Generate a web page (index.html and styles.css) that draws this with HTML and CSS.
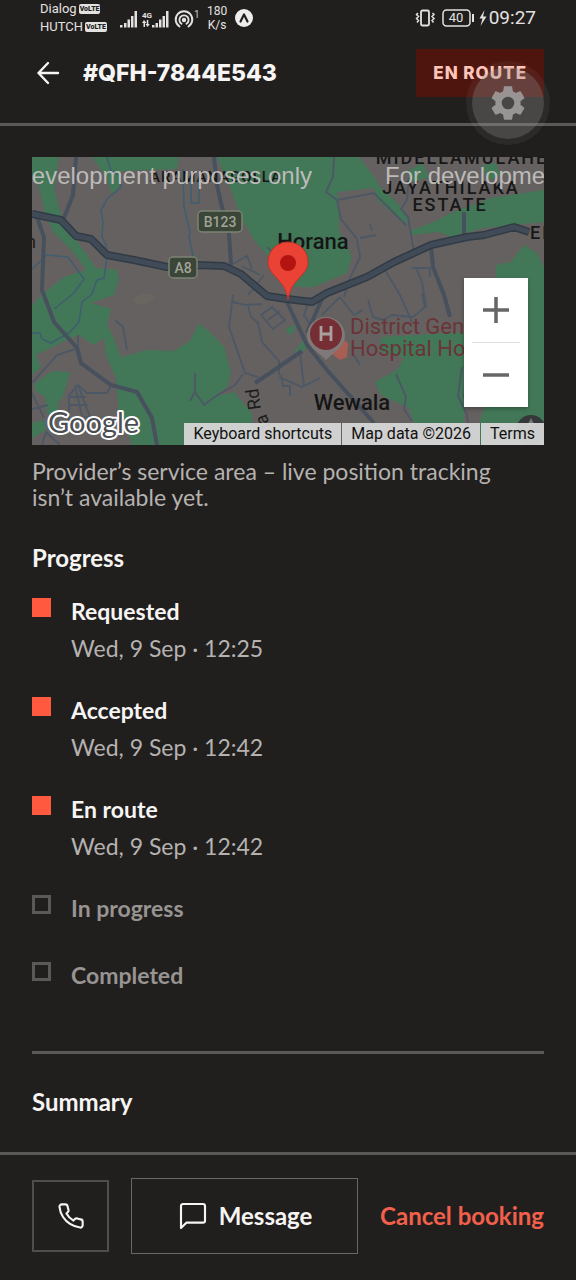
FILE: index.html
```html
<!DOCTYPE html>
<html lang="en">
<head>
<meta charset="utf-8">
<meta name="viewport" content="width=device-width, initial-scale=1">
<title>Booking #QFH-7844E543</title>
<link rel="stylesheet" href="styles.css">
</head>
<body>
<div class="app">
  <div class="status">
    <div class="carriers">
      <span class="carrier">Dialog <b class="volte">VoLTE</b></span>
      <span class="carrier">HUTCH <b class="volte">VoLTE</b></span>
    </div>
    <svg class="signals" width="80" height="24" viewBox="0 0 80 24" aria-hidden="true">
      <g fill="#e4e2e0">
        <path d="M0 19h2.500v2.500H0zM4 17h2.500v4.500H4zM7.500 13.500h2.500v8H7.500zM11 10h2.500v11.500H11zM14.500 5h2.500v16.500h-2.500z"/>
        <path d="M32 19h2.500v2.500H32zM35.500 17h2.500v4.500h-2.500zM39 13.500h2.500v8H39zM42.500 10h2.500v11.500h-2.500zM46 5h2.500v16.500H46z"/>
        <path d="M24 14l2.500 3H25v4h-1.500v-4H22zM27.500 21l-2-3h1.300v-4h1.500v4h1.500z"/>
        <circle cx="64" cy="14" r="2.200"/>
      </g>
      <g fill="none" stroke="#e4e2e0" stroke-width="1.900" stroke-linecap="round">
        <path d="M61.500 17.800a4.600 4.600 0 1 1 5 0M59.500 20.500a8.300 8.300 0 1 1 9 0"/>
      </g>
      <text x="22" y="12" class="tiny-bold">4G</text>
      <text x="74" y="12" class="tiny">1</text>
    </svg>
    <div class="speed"><span>180</span><span>K/s</span></div>
    <svg class="expo" width="18" height="18" viewBox="0 0 18 18" aria-hidden="true">
      <circle cx="9" cy="9" r="9" fill="#efedeb"/>
      <path d="M5.500 12.500L9 5.500l3.500 7" fill="none" stroke="#211f1e" stroke-width="2.200" stroke-linecap="round" stroke-linejoin="round"/>
    </svg>
    <svg class="device" width="72" height="20" viewBox="0 0 72 20" aria-hidden="true">
      <g fill="none" stroke="#e4e2e0" stroke-width="1.500">
        <rect x="6" y="2.500" width="8" height="15" rx="1.500" stroke-width="1.800"/>
        <path d="M3 5L1.500 6.500 3.500 8.500 1.500 10.500 3.500 12.500 2 14.500M17.500 5L19 6.500 17 8.500 19 10.500 17 12.500 18.500 14.500"/>
        <rect x="28" y="2" width="27" height="16" rx="3.500"/>
        <path d="M58 6v8" stroke-width="2"/>
      </g>
      <path d="M69.500 2L64.500 10.500h3L65.500 18l6-9.500H68z" fill="#e4e2e0"/>
      <text x="41" y="14" class="battery">40</text>
    </svg>
    <time class="clock">09:27</time>
  </div>

  <header class="header">
    <button class="back" type="button" aria-label="Back">
      <svg width="24" height="24" viewBox="0 0 24 24" fill="none" stroke="#f7f5f3" stroke-width="2.400" stroke-linecap="round" stroke-linejoin="round"><path d="M22 12H2.500M12 2L2.500 12 12 22"/></svg>
    </button>
    <h1 class="title">#QFH-7844E543</h1>
    <span class="badge">EN ROUTE</span>
    <button class="settings" type="button" aria-label="Settings">
      <svg width="42" height="42" viewBox="0 0 24 24"><path fill="#9f9e9d" d="M19.140 12.940c.040-.3.060-.610.060-.940s-.020-.640-.070-.940l2.030-1.580a.49.49 0 0 0 .120-.610l-1.920-3.320a.488.488 0 0 0-.590-.220l-2.390.960a7.030 7.030 0 0 0-1.620-.940l-.360-2.540a.484.484 0 0 0-.480-.410h-3.840c-.240 0-.430.170-.470.410l-.360 2.540c-.590.240-1.130.570-1.620.940l-2.390-.960c-.220-.080-.470 0-.590.220L2.740 8.870c-.120.210-.080.470.120.610l2.030 1.580c-.050.3-.090.630-.090.940s.020.640.070.940l-2.030 1.580a.49.49 0 0 0-.120.610l1.920 3.320c.120.220.370.290.590.220l2.390-.960c.5.380 1.030.7 1.620.940l.360 2.540c.050.240.240.410.480.410h3.840c.240 0 .440-.170.470-.410l.360-2.540c.590-.240 1.130-.560 1.620-.940l2.390.960c.220.080.470 0 .590-.220l1.920-3.320a.49.49 0 0 0-.120-.610zM12 15.600a3.600 3.600 0 1 1 0-7.200 3.600 3.600 0 0 1 0 7.200z"/></svg>
    </button>
  </header>

  <main class="content">
    <section class="map" aria-label="Map of Horana">
      <svg class="map-art" viewBox="0 0 512 288" preserveAspectRatio="xMidYMid slice">
        <rect width="512" height="288" fill="#656160"/>
        <g fill="#427858">
          <path d="M0 0H27L22 33 29 57 42 80 64 111 85 113 87 122 82 138 59 146 79 152 75 168 79 175 89 200 115 193 142 194 158 184 167 166 179 176 192 190 199 216 195 230 182 240 202 235 219 255 225 288H99V283L87 261 84 221 74 198 72 181 62 188 47 178 39 181 4 198 9 210 0 218V148L12 136 32 120 54 113 42 96 22 76 14 60 7 30 0 20z"/>
          <path d="M60 0L74 20 80 37 87 30 90 14 145 12 147 0z"/>
          <path d="M185 0L199 33 209 60 222 83 240 104 252 130H282L315 116 320 100 307 73V43L305 35 342 31 345 43 374 68 376 60 365 46 348 30 342 20 327 0z"/>
          <path d="M380 78V73L402 65 419 56 459 41 512 33V65L452 71 419 80 407 75z"/>
          <path d="M376 14L390 6 397 20 378 26zM450 8L464 6 468 18 456 24z"/>
          <path d="M464 108L479 105 492 88 505 96 512 110V288H440L452 251 464 230z"/>
          <path d="M349 180L432 175V266H382L377 251 349 238 343 225 365 213 372 201 349 195z"/>
          <path d="M254 171L264 168 262 175 256 178zM263 194L272 183 274 192 265 198z"/>
          <path d="M2 227L20 214 38 215 32 237 26 246V262L15 256 13 240 3 234zM0 266L12 263 14 273 0 281z"/>
        </g>
        <path d="M100 142Q113 132 123 140 111 154 100 142z" fill="#68665e"/>
        <path d="M299 196L312 183 316 186 315 200 308 203z" fill="#a85e51"/>
        <g fill="none" stroke="#405e70" stroke-width="1.600">
          <path d="M75 0L79 14 88 18 89 30 75 42 69 53 71 65 70 80 74 88 75 100 72 121 65 123 60 137 50 145 47 165 38 175 19 186 10 182 8 176 0 176"/>
          <path d="M15 98L36 100 52 122 42 136 22 152M15 98L0 112"/>
          <path d="M151 12L152 50 158 75 157 80 163 108M159 20V46H167V25"/>
        </g>
        <g fill="none" stroke="#4d5866" stroke-width="1.900">
          <path d="M302 0L301 20 294 35 305 43 342 36 374 68M305 43L309 62 325 82 328 100 318 121 312 140M328 81L344 78M338 67L340 74M377 21L375 43 369 52 376 60 382 95M353 113L368 138 380 165M380 111H398V120M384 111L390 125 394 150M199 108L215 99 220 112M235 90L252 106M232 118L216 138M228 118L210 109M46 178V191L25 198 0 226M79 228L75 236 55 236 46 228 37 238V265M46 228L58 260 39 262M43 228L51 264M37 240H54M37 248H56M0 236L12 261M0 252L16 248M10 288L14 275 28 288M83 163L91 170 95 193M163 216V235L172 248 184 239 203 228 211 217M163 235L158 244M201 138L197 170 213 216 226 220M201 145L213 148 230 147M216 148L219 160 226 166 230 185 247 204 247 218M229 158L240 150 253 163 241 172zM236 163L248 154M249 218L251 229H258V239M247 220L270 230 288 221M278 140L272 158 280 170M290 158L308 140M308 140L322 158 331 153M336 143L341 160 351 163 360 158 381 160 393 150 390 136M268 196L272 230M321 197L328 208M364 217L374 240 372 252 380 264"/>
          <path d="M430 210L426 239 435 258 438 288M435 211L432 241"/>
        </g>
        <g fill="none" stroke="#47505d" stroke-width="4">
          <path d="M182 0L185 28 189 46 197 77 199 108M44 0L41 38 32 61M5 60L12 80 10 133 22 165 45 191 49 206 79 228 105 235 120 261 125 288M255 145L275 188 295 213 342 266M432 55V80M399 90L401 110 412 138 418 160M223 226L238 216 270 194M290 142L275 176"/>
        </g>
        <g fill="none" stroke-linejoin="round">
          <path d="M0 57L29 63 44 79 59 82 75 98 102 103 135 110 165 108 192 109 209 117 235 139 255 142 280 145 295 136 335 120 362 105 399 88 435 80 452 78 482 70 497 75" stroke="#303b45" stroke-width="8"/>
          <path d="M0 57L29 63 44 79 59 82 75 98 102 103 135 110 165 108 192 109 209 117 235 139 255 142 280 145 295 136 335 120 362 105 399 88 435 80 452 78 482 70 497 75" stroke="#414b57" stroke-width="5"/>
        </g>
        <g fill="#3b4538" stroke="#7b8472" stroke-width="1.500">
          <rect x="166" y="54" width="44" height="21" rx="4"/>
          <rect x="137" y="100" width="28" height="21" rx="4"/>
        </g>
        <text x="188" y="70" class="shield">B123</text>
        <text x="151" y="116" class="shield">A8</text>
        <g class="district">
          <text x="184" y="25" class="small-district">ARAMANAGOLLA</text>
          <text x="430" y="7">MIDELLAMULAHE</text>
          <text x="419" y="37">JAYATHILAKA</text>
          <text x="418" y="54">ESTATE</text>
          <text x="510" y="82">EL</text>
        </g>
        <text x="281" y="92" class="place">Horana</text>
        <text x="320" y="253" class="place">Wewala</text>
        <text x="-6" y="91" class="road-name">n</text>
        <text transform="translate(229 252) rotate(-98)" class="road-name">Rd</text>
        <text transform="translate(244 284) rotate(-110)" class="road-name">ana</text>
        <g>
          <path d="M294 160a19 19 0 0 1 19 19c0 10-9 14-19 24-10-10-19-14-19-24a19 19 0 0 1 19-19z" fill="#80797a"/>
          <circle cx="294" cy="177" r="16" fill="#752e34"/>
          <path d="M289 169v15M299 169v15M289 177h10" stroke="#a9a19f" stroke-width="2.800"/>
        </g>
        <g class="hospital"><text x="318" y="177">District General</text><text x="318" y="199">Hospital Horana</text></g>
        <circle cx="499" cy="273" r="15" fill="#35383b"/>
        <path d="M499 261l4 8-4-2-4 2z" fill="#777"/>
        <g class="watermark"><text x="280" y="27" text-anchor="end">For development purposes only</text><text x="353" y="27">For development purposes only</text></g>
        <path d="M256 143c-2-13-7-17-13-24-5-5-7-9-7-14a20 20 0 0 1 40 0c0 5-2 9-7 14-6 7-11 11-13 24z" fill="#ea4335" stroke="#b9352b" stroke-width="1"/>
        <circle cx="256" cy="106" r="8" fill="#b31412"/>
        <text x="16" y="276" class="google">Google</text>
      </svg>
      <div class="zoom">
        <button type="button" aria-label="Zoom in"><svg width="26" height="26" viewBox="0 0 26 26"><path d="M0 13h26M13 0v26" stroke="#666" stroke-width="3.500"/></svg></button>
        <button type="button" aria-label="Zoom out"><svg width="26" height="26" viewBox="0 0 26 26"><path d="M0 13h26" stroke="#666" stroke-width="3.500"/></svg></button>
      </div>
      <div class="credits">
        <button type="button">Keyboard shortcuts</button>
        <span>Map data ©2026</span>
        <a href="#terms">Terms</a>
      </div>
    </section>
    <p class="note">Provider’s service area – live position tracking isn’t available yet.</p>

    <h2 class="heading">Progress</h2>
    <ol class="steps">
      <li class="step done"><span class="mark"></span><div><h3>Requested</h3><p>Wed, 9 Sep · 12:25</p></div></li>
      <li class="step done"><span class="mark"></span><div><h3>Accepted</h3><p>Wed, 9 Sep · 12:42</p></div></li>
      <li class="step done"><span class="mark"></span><div><h3>En route</h3><p>Wed, 9 Sep · 12:42</p></div></li>
      <li class="step"><span class="mark"></span><div><h3>In progress</h3></div></li>
      <li class="step"><span class="mark"></span><div><h3>Completed</h3></div></li>
    </ol>
    <section class="summary"><h2 class="heading">Summary</h2></section>
  </main>

  <footer class="actions">
    <button class="call" type="button" aria-label="Call">
      <svg width="28" height="28" viewBox="0 0 24 24" fill="none" stroke="#f7f5f3" stroke-width="1.800" stroke-linecap="round" stroke-linejoin="round"><path d="M22 16.920v3a2 2 0 0 1-2.180 2 19.790 19.790 0 0 1-8.630-3.070 19.500 19.500 0 0 1-6-6 19.790 19.790 0 0 1-3.070-8.670A2 2 0 0 1 4.110 2h3a2 2 0 0 1 2 1.720 12.840 12.840 0 0 0 .7 2.810 2 2 0 0 1-.450 2.110L8.090 9.910a16 16 0 0 0 6 6l1.270-1.270a2 2 0 0 1 2.110-.450 12.840 12.840 0 0 0 2.810.7A2 2 0 0 1 22 16.920z"/></svg>
    </button>
    <button class="message" type="button">
      <svg width="32" height="32" viewBox="0 0 24 24" fill="none" stroke="#f7f5f3" stroke-width="1.600" stroke-linecap="round" stroke-linejoin="round"><path d="M21 15.500a1.500 1.500 0 0 1-1.500 1.500H7l-4 4V4.500A1.500 1.500 0 0 1 4.500 3h15A1.500 1.500 0 0 1 21 4.500z"/></svg>
      Message
    </button>
    <button class="cancel" type="button">Cancel booking</button>
  </footer>
</div>
</body>
</html>
```

FILE: styles.css
```css
* { box-sizing: border-box; }

body {
  margin: 0;
  background: #211f1e;
  color: #f7f5f3;
  font: 24px/26px Lato, "Open Sans", sans-serif;
}

h1, h2, h3, p, ol { margin: 0; padding: 0; }
button { padding: 0; border: 0; background: none; color: inherit; font: inherit; }
svg { display: block; flex: none; }

.app { display: flex; flex-direction: column; min-height: 100vh; }

.status {
  display: flex;
  align-items: center;
  height: 36px;
  padding: 0 40px;
  color: #e4e2e0;
  font-family: Roboto, sans-serif;
}
.carriers { display: flex; flex-direction: column; width: 80px; font-size: 13px; line-height: 18px; }
.carrier { display: flex; align-items: center; gap: 2px; }
.volte {
  padding: 0 1px;
  border-radius: 2px;
  background: #e4e2e0;
  color: #211f1e;
  font-size: 7px;
  font-weight: 900;
  line-height: 10px;
}
.tiny { fill: #c4c2c0; font: 10px Roboto, sans-serif; }
.tiny-bold { fill: #e4e2e0; font: 700 8px Roboto, sans-serif; }
.speed { display: flex; flex-direction: column; align-items: center; margin-left: 7px; font-size: 12px; line-height: 14px; }
.expo { margin-left: 8px; }
.device { margin-left: auto; }
.battery { fill: #e4e2e0; font: 13px Roboto, sans-serif; text-anchor: middle; }
.clock { margin-left: 2px; font-size: 19px; line-height: 24px; }

.header {
  position: relative;
  display: flex;
  align-items: center;
  height: 90px;
  padding: 0 32px 13px;
  border-bottom: 3px solid #5b5957;
}
.back { padding: 4px; margin-right: 19px; }
.title { flex: 1; font: 800 23px/28px Inter, sans-serif; }
.badge {
  padding: 12px 17px;
  background: #4d150e;
  color: #ffc4b8;
  font: 800 17px/24px Inter, sans-serif;
  letter-spacing: 1px;
}
.settings {
  position: absolute;
  top: 25px;
  right: 26px;
  display: grid;
  place-items: center;
  width: 84px;
  height: 84px;
  border: 6px solid rgba(255, 255, 255, 0.05);
  border-radius: 50%;
  background: rgba(150, 150, 150, 0.34);
  background-clip: padding-box;
}
.settings svg { opacity: 0.9; }

.content { flex: 1; padding: 31px 32px 0; }

.map { position: relative; overflow: hidden; }
.map-art { width: 100%; aspect-ratio: 16 / 9; font-family: Roboto, sans-serif; }
.shield { fill: #a0a397; font-size: 14px; font-weight: 500; text-anchor: middle; }
.district { fill: #171717; font-size: 18px; font-weight: 500; letter-spacing: 2px; text-anchor: middle; }
.small-district { font-size: 15px; letter-spacing: 1px; }
.place { fill: #151515; font-size: 22px; font-weight: 500; text-anchor: middle; }
.road-name { fill: #1c1c1c; font-size: 18px; }
.hospital { fill: #6b3438; font-size: 22px; }
.watermark { fill: #bdbbb9; font: 24px "Liberation Sans", Arial, sans-serif; }
.google {
  fill: #4b4e52;
  stroke: #fff;
  stroke-width: 4px;
  stroke-linejoin: round;
  paint-order: stroke;
  font: 400 29px Lato, sans-serif;
}

.zoom {
  position: absolute;
  top: 42%;
  right: 16px;
  display: grid;
  width: 64px;
  padding: 0 8px;
  background: #fff;
  box-shadow: 0 2px 4px rgba(0, 0, 0, 0.3);
}
.zoom button { display: grid; place-items: center; height: 64px; }
.zoom button + button { height: 65px; border-top: 1px solid #e0e0e0; }

.credits {
  position: absolute;
  right: 0;
  bottom: 0;
  display: flex;
  gap: 1px;
  color: #111;
  font: 16px/22px Roboto, sans-serif;
}
.credits > * { padding: 0 9px; background: rgba(215, 215, 215, 0.94); color: inherit; text-decoration: none; }

.note { margin-top: 13px; padding-right: 24px; color: #b5b2b0; font-size: 23px; }
.heading { font-size: 24px; font-weight: 700; line-height: 28px; }
.note + .heading { margin-top: 34px; }

.steps { display: grid; gap: 36px; margin-top: 26px; list-style: none; font-size: 23px; }
.step { display: flex; gap: 20px; color: #979492; }
.mark { flex: none; width: 19px; height: 19px; border: 3px solid #5b5957; }
.done .mark { border: 0; background: #ff5a40; }
.step h3 { padding-bottom: 4px; font-size: 23px; font-weight: 700; line-height: 27px; }
.step p { margin-top: 6px; color: #b5b2b0; line-height: 26px; }
.done h3 { color: #f7f5f3; }

.summary { margin-top: 58px; padding-top: 34px; border-top: 3px solid #5b5957; }

.actions {
  display: flex;
  align-items: center;
  gap: 22px;
  padding: 23px 32px 26px;
  border-top: 3px solid #5b5957;
  font-weight: 700;
}
.call { display: grid; place-items: center; width: 77px; height: 72px; border: 2px solid #504e4c; }
.message {
  flex: 1;
  display: flex;
  align-items: center;
  justify-content: center;
  gap: 10px;
  height: 76px;
  border: 1px solid #6a6866;
}
.cancel { color: #f2604b; white-space: nowrap; }
```
